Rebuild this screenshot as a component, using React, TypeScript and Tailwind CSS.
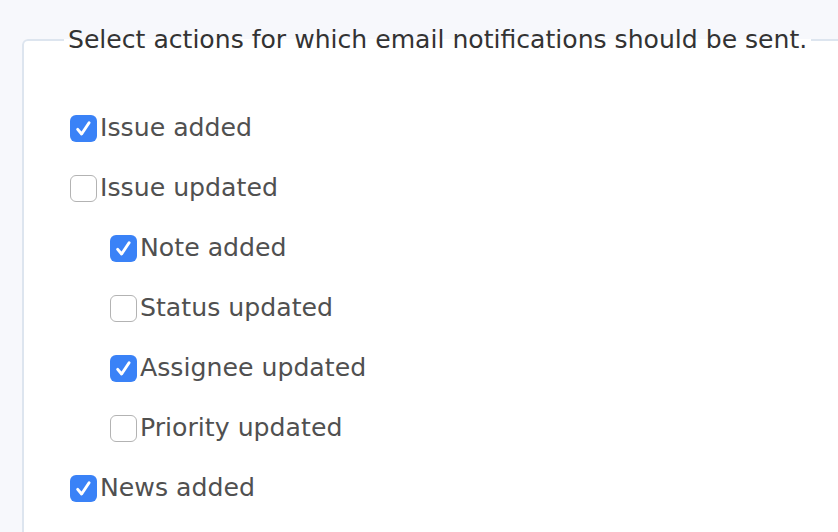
import React from "react";

type Item = { label: string; checked: boolean; indent?: boolean };

const items: Item[] = [
  { label: "Issue added", checked: true },
  { label: "Issue updated", checked: false },
  { label: "Note added", checked: true, indent: true },
  { label: "Status updated", checked: false, indent: true },
  { label: "Assignee updated", checked: true, indent: true },
  { label: "Priority updated", checked: false, indent: true },
  { label: "News added", checked: true },
];

function Box({ checked }: { checked: boolean }) {
  if (checked) {
    return (
      <span className="flex h-[27px] w-[27px] shrink-0 items-center justify-center rounded-[6px] bg-[#3a82f7]">
        <svg width="19" height="19" viewBox="0 0 18 18" fill="none">
          <path d="M3.5 9.8 L7.2 14.2 L14.3 3.6" stroke="white" strokeWidth="2.8" strokeLinecap="round" strokeLinejoin="round" />
        </svg>
      </span>
    );
  }
  return <span className="h-[27px] w-[27px] shrink-0 rounded-[6px] border-[1.5px] border-[#b3b3b3] bg-white" />;
}

export default function App() {
  return (
    <div className="h-[532px] w-[838px] overflow-hidden bg-[#f7f8fc] pl-[22px] pt-[25px]" style={{ fontFamily: '"DejaVu Sans", Verdana, sans-serif' }}>
      <fieldset className="m-0 h-[600px] w-[860px] rounded-[6px] border-2 border-[#dde5ef] bg-white pl-[46px] pt-[43px]">
        <legend className="-ml-[6px] whitespace-nowrap px-[4px] text-[25.1px] leading-[30px] text-[#333333]">
          Select actions for which email notifications should be sent.
        </legend>
        <div className="flex flex-col">
          {items.map((it) => (
            <label key={it.label} className={`flex h-[60px] items-center gap-[3px] text-[25.2px] text-[#505050] ${it.indent ? "pl-[40px]" : ""}`}>
              <Box checked={it.checked} />
              <span>{it.label}</span>
            </label>
          ))}
        </div>
      </fieldset>
    </div>
  );
}
